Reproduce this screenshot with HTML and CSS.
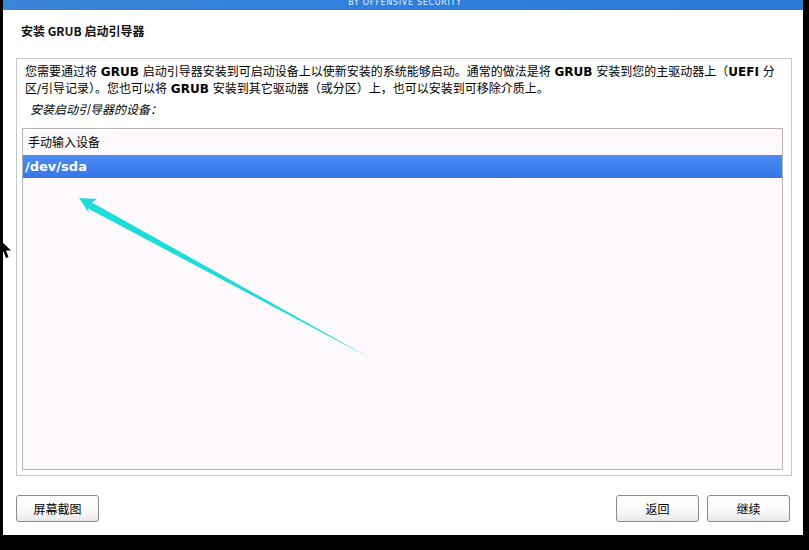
FILE: index.html
```html
<!DOCTYPE html>
<html lang="zh-CN">
<head>
<meta charset="utf-8">
<title>安装 GRUB 启动引导器</title>
<link rel="stylesheet" href="styles.css">
</head>
<body>
<div class="window">
  <div class="banner"><span class="banner-text">BY OFFENSIVE SECURITY</span></div>
  <h1 class="title">安装 GRUB 启动引导器</h1>
  <div class="frame">
    <p class="desc">您需要通过将 <b>GRUB</b> 启动引导器安装到可启动设备上以使新安装的系统能够启动。通常的做法是将 <b>GRUB</b> 安装到您的主驱动器上（<b>UEFI</b> 分区/引导记录）。您也可以将 <b>GRUB</b> 安装到其它驱动器（或分区）上，也可以安装到可移除介质上。</p>
    <p class="label">安装启动引导器的设备：</p>
    <div class="listbox">
      <div class="row">手动输入设备</div>
      <div class="row selected">/dev/sda</div>
    </div>
  </div>
  <div class="buttons">
    <button class="btn">屏幕截图</button>
    <span class="spacer"></span>
    <button class="btn">返回</button>
    <button class="btn">继续</button>
  </div>
</div>
<svg class="arrow" width="809" height="550" viewBox="0 0 809 550">
  <polygon points="79,198 97,199 92,202.5 370,358 88,208.5 89,213" fill="#1edcda"/>
</svg>
<svg class="cursor" width="12" height="20" viewBox="0 0 12 20">
  <polygon points="0,0 0,15 3.5,11.5 6,18 8.5,17 6,10.5 11,10.5" fill="#000"/>
</svg>
</body>
</html>
```
FILE: styles.css
```css
html, body {
  margin: 0;
  padding: 0;
  background: #000;
  width: 809px;
  height: 550px;
  overflow: hidden;
}

body {
  position: relative;
  font-family: "DejaVu Sans", "Noto Sans CJK SC", sans-serif;
  font-size: 12px;
  color: #000;
}

.window {
  margin-left: 3px;
  width: 800px;
  height: 535px;
  background: #fff;
  display: flex;
  flex-direction: column;
}

.banner {
  height: 10px;
  background: linear-gradient(90deg, #3b84d6 0%, #2f7fdc 50%, #2a78d6 100%);
  display: flex;
  justify-content: center;
  overflow: hidden;
}

.banner-text {
  color: #eaf2fc;
  font-family: "DejaVu Sans", sans-serif;
  font-size: 8px;
  line-height: 8px;
  letter-spacing: 0.7px;
  margin-top: -1px;
  margin-left: 4px;
}

.title {
  margin: 12px 0 0 18px;
  font-family: "Noto Sans CJK SC", sans-serif;
  font-size: 12px;
  line-height: 18px;
  font-weight: 700;
  color: #111;
}

.frame {
  margin: 18px 11px 0 13px;
  flex: 1;
  border: 1px solid #c6c6c6;
  padding: 5px 8px 5px 5px;
  display: flex;
  flex-direction: column;
  min-height: 0;
}

.desc {
  margin: 0 -6px 0 3px;
  line-height: 17px;
}

.desc b {
  font-weight: 700;
}

.label {
  margin: 4px 0 0 8px;
  line-height: 17px;
  font-style: italic;
}

.listbox {
  margin-top: 9px;
  flex: 1;
  border: 1px solid #b4b4b4;
  background: #fdf9fd;
  padding-top: 3px;
}

.row {
  height: 23px;
  line-height: 23px;
  padding-left: 5px;
}

.row.selected {
  padding-left: 2px;
  background: linear-gradient(180deg, #4b8cf5 0%, #3f80ee 50%, #3876e6 100%);
  color: #fff;
  font-weight: 700;
  font-size: 13px;
}

.buttons {
  display: flex;
  gap: 8px;
  margin: 19px 13px 13px 13px;
}

.spacer {
  flex: 1;
}

.btn {
  width: 83px;
  height: 27px;
  border: 1px solid #8a8a8a;
  border-radius: 3px;
  background: linear-gradient(180deg, #ffffff 0%, #fafafa 55%, #e8e8e8 100%);
  font-family: "Noto Sans CJK SC", sans-serif;
  font-size: 12px;
  color: #000;
  padding: 0;
}

.arrow {
  position: absolute;
  left: 0;
  top: 0;
  pointer-events: none;
}

.cursor {
  position: absolute;
  left: 0;
  top: 240px;
}
```
